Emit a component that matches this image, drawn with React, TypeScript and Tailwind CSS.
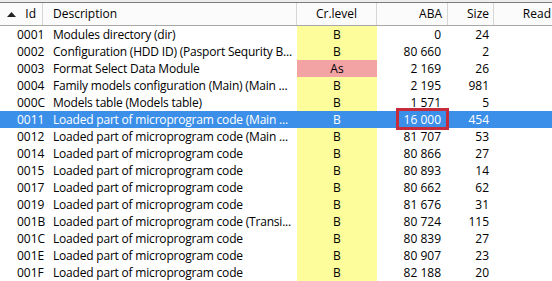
import React from "react";

type Row = {
  id: string;
  desc: string;
  level: string;
  aba: string;
  size: string;
};

const rows: Row[] = [
  { id: "0001", desc: "Modules directory (dir)", level: "B", aba: "0", size: "24" },
  { id: "0002", desc: "Configuration (HDD ID) (Pasport Sequrity B...", level: "B", aba: "80 660", size: "2" },
  { id: "0003", desc: "Format Select Data Module", level: "As", aba: "2 169", size: "26" },
  { id: "0004", desc: "Family models configuration (Main) (Main ...", level: "B", aba: "2 195", size: "981" },
  { id: "000C", desc: "Models table (Models table)", level: "B", aba: "1 571", size: "5" },
  { id: "0011", desc: "Loaded part of microprogram code (Main ...", level: "B", aba: "16 000", size: "454" },
  { id: "0012", desc: "Loaded part of microprogram code (Main ...", level: "B", aba: "81 707", size: "53" },
  { id: "0014", desc: "Loaded part of microprogram code", level: "B", aba: "80 866", size: "27" },
  { id: "0015", desc: "Loaded part of microprogram code", level: "B", aba: "80 893", size: "14" },
  { id: "0017", desc: "Loaded part of microprogram code", level: "B", aba: "80 662", size: "62" },
  { id: "0019", desc: "Loaded part of microprogram code", level: "B", aba: "81 676", size: "31" },
  { id: "001B", desc: "Loaded part of microprogram code (Transi...", level: "B", aba: "80 724", size: "115" },
  { id: "001C", desc: "Loaded part of microprogram code", level: "B", aba: "80 839", size: "27" },
  { id: "001E", desc: "Loaded part of microprogram code", level: "B", aba: "80 907", size: "23" },
  { id: "001F", desc: "Loaded part of microprogram code", level: "B", aba: "82 188", size: "20" },
];

const cols = "grid grid-cols-[43px_254px_80px_71px_46px_58px]";

export default function App() {
  return (
    <div className="w-[552px] h-[281px] overflow-hidden bg-white text-[12px] text-black font-['Open_Sans',sans-serif] leading-none">
      {/* strip of the panel above */}
      <div className="h-[3px] bg-[#ececec] border-b border-[#7d7d7d]" />

      {/* header */}
      <div className={`${cols} h-[23px] bg-[#fbfbfb] border-b border-[#a8a8a8]`}>
        <div className="flex items-center justify-between pl-[7px] pr-[6px] border-r border-[#d6d6d6]">
          <svg width="9" height="5" viewBox="0 0 9 5">
            <path d="M0 5 L4.5 0 L9 5 Z" fill="#222" />
          </svg>
          <span>Id</span>
        </div>
        <div className="flex items-center pl-[10px] border-r border-[#d6d6d6]">Description</div>
        <div className="flex items-center justify-center border-r border-[#d6d6d6]">Cr.level</div>
        <div className="flex items-center justify-end pr-[5px] border-r border-[#d6d6d6]">ABA</div>
        <div className="flex items-center justify-end pr-[4px] border-r border-[#d6d6d6]">Size</div>
        <div className="flex items-center justify-end pr-[1px]">Read</div>
      </div>

      {/* rows */}
      {rows.map((r) => {
        const selected = r.id === "0011";
        const levelBg = selected ? "" : r.level === "As" ? "bg-[#f4a3a5]" : "bg-[#fdfd9c]";
        return (
          <div
            key={r.id}
            className={`${cols} h-[17px] ${selected ? "bg-[#3b8fe8] text-white" : ""}`}
          >
            <div className="flex items-center pl-[17px]">{r.id}</div>
            <div className="flex items-center pl-[10px] pr-[2px] whitespace-nowrap overflow-hidden tracking-[-0.2px]">
              {r.desc}
            </div>
            <div className={`flex items-center justify-center ${levelBg}`}>{r.level}</div>
            <div className="relative flex items-center justify-end pr-[7px]">
              {r.aba}
              {selected && (
                <div className="absolute left-[19px] right-[-1px] top-[-3px] bottom-[-2px] border-[3px] border-[#c62b3b]" />
              )}
            </div>
            <div className="flex items-center justify-end pr-[5px]">{r.size}</div>
            <div />
          </div>
        );
      })}
    </div>
  );
}
